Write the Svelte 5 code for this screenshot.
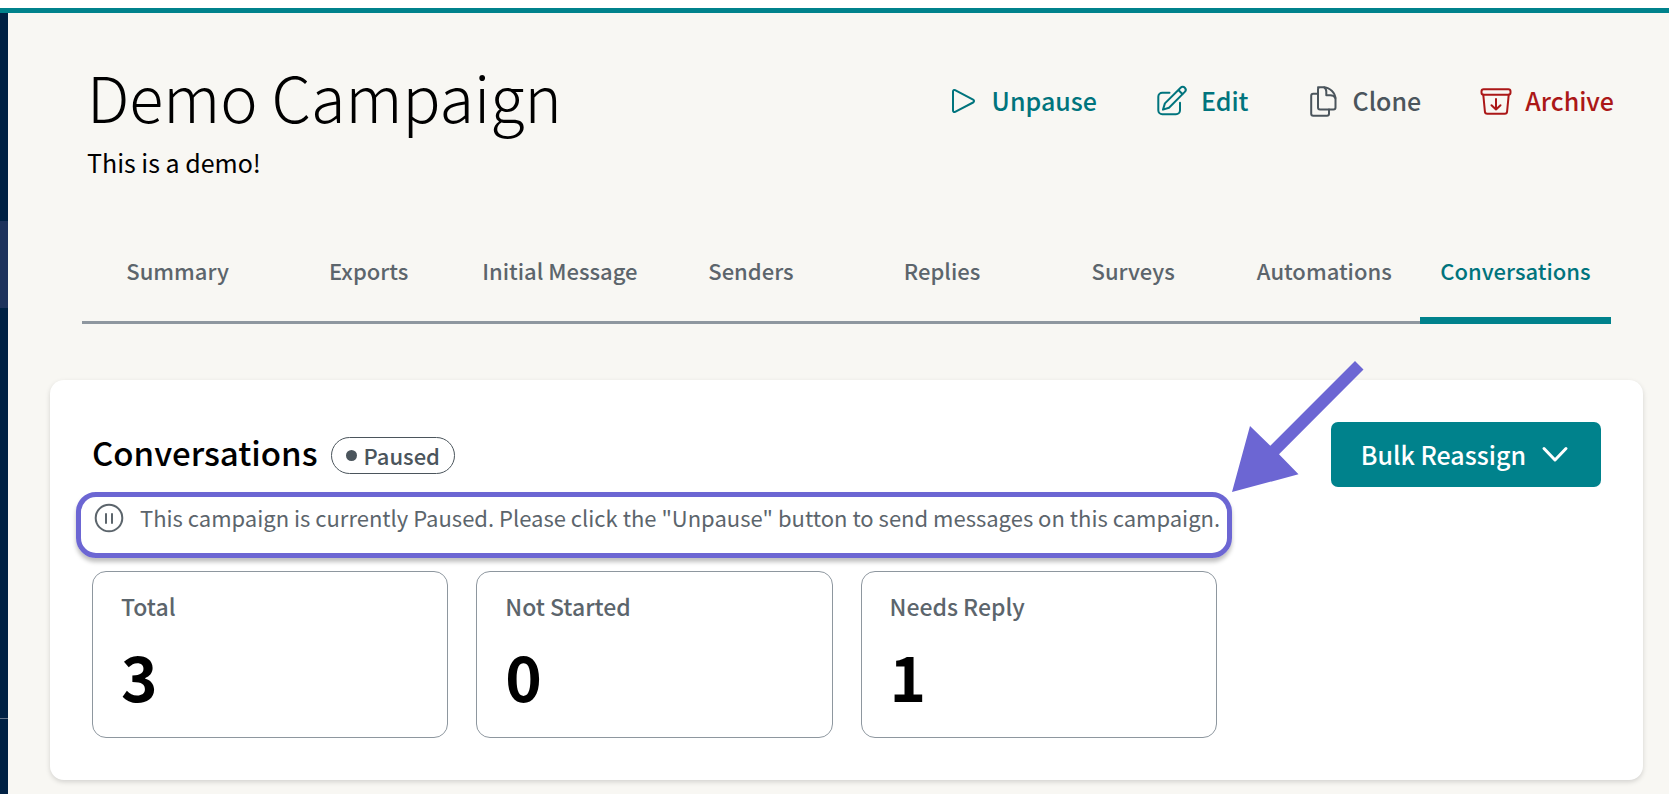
<script>
	let activeTab = $state('Conversations');

	const tabs = [
		'Summary',
		'Exports',
		'Initial Message',
		'Senders',
		'Replies',
		'Surveys',
		'Automations',
		'Conversations'
	];

	const stats = [
		{ label: 'Total', value: 3 },
		{ label: 'Not Started', value: 0 },
		{ label: 'Needs Reply', value: 1 }
	];
</script>

<div class="topbar"></div>
<div class="layout">
	<aside class="sidebar">
		<div class="sidebar-active"></div>
		<div class="sidebar-footer"></div>
	</aside>

	<main>
		<header class="header">
			<div>
				<h1>Demo Campaign</h1>
				<p class="subtitle">This is a demo!</p>
			</div>
			<div class="actions">
				<button class="action teal" type="button">
					<svg viewBox="0 0 30 30">
						<path d="M5 6.500v19c0 1.300 1 1.900 2.100 1.300l18-9.300c1.300-.7 1.300-2.100 0-2.800l-18-9.500C6 4.600 5 5.200 5 6.500z" />
					</svg>
					Unpause
				</button>
				<button class="action teal" type="button">
					<svg viewBox="0 0 30 30">
						<path d="M12.500 7.700H5.300a4 4 0 0 0-4 4v13.600a4 4 0 0 0 4 4H19a4 4 0 0 0 4-4v-7.600" />
						<path d="M6 24.600l1.900-6.200L23.600 2.700a2.900 2.900 0 0 1 4.200 4.200L12 22.700z M21.400 5l4.200 4.200" />
					</svg>
					Edit
				</button>
				<button class="action gray" type="button">
					<svg viewBox="0 0 30 30">
						<path d="M10 2.200h5.200c6.400 0 12.300 5.400 12.300 12.100v8.200a2 2 0 0 1-2 2H12a2 2 0 0 1-2-2v-18.300a2 2 0 0 1 2-2" />
						<path d="M16.200 2.300c1.700 1 2.100 2.500 2.100 4.500v3.400h3.900c2.600 0 4.500 1.300 5.200 3" />
						<path d="M10 8.800H5.200a2 2 0 0 0-2 2v18a2 2 0 0 0 2 2H19a2 2 0 0 0 2-2v-4.300" />
					</svg>
					Clone
				</button>
				<button class="action red" type="button">
					<svg viewBox="0 0 30 30">
						<rect x="0.500" y="4.300" width="29" height="5.500" rx="2.200" />
						<path d="M2.300 9.800l1.600 16.700c.1 1.500 1 2.300 2.400 2.300h17.400c1.400 0 2.300-.8 2.400-2.300l1.600-16.700" />
						<path d="M15 14v10.500M10.500 20.200l4.500 4.300 4.500-4.300" />
					</svg>
					Archive
				</button>
			</div>
		</header>

		<nav class="tabs">
			{#each tabs as tab}
				<button
					class="tab"
					class:active={activeTab === tab}
					type="button"
					onclick={() => (activeTab = tab)}>{tab}</button
				>
			{/each}
		</nav>

		<section class="panel">
			<div class="panel-header">
				<div class="panel-title">
					<h2>Conversations</h2>
					<span class="badge"><span class="dot"></span>Paused</span>
				</div>
				<button class="reassign" type="button">
					Bulk Reassign
					<svg viewBox="0 0 28 28">
						<path d="M3 7.500l11 11.500 11-11.500" />
					</svg>
				</button>
			</div>

			<div class="grid">
				<div class="notice">
					<svg class="pause" viewBox="0 0 30 30">
						<circle cx="15" cy="15" r="13.300" />
						<path d="M12 11v9M18 11v9" />
					</svg>
					<p>
						This campaign is currently Paused. Please click the "Unpause" button to send messages on
						this campaign.
					</p>
					<svg class="arrow" viewBox="0 0 132 132">
						<path d="M0 132L18 66l20.300 19.700L123 1l8.500 8.500L47 94.300l19.500 20z" />
					</svg>
				</div>
			</div>
			<div class="grid stats">
				{#each stats as stat (stat.label)}
					<div class="stat">
						<p class="stat-label">{stat.label}</p>
						<p class="stat-value">{stat.value}</p>
					</div>
				{/each}
			</div>
		</section>
	</main>
</div>

<style>
	:global(body) {
		margin: 0;
		background: #f8f7f3;
		font-family: 'Noto Sans CJK SC', 'Noto Sans', sans-serif;
		color: #000;
	}

	h1,
	h2,
	p {
		margin: 0;
	}

	button {
		border: none;
		background: none;
		padding: 0;
		font-family: inherit;
		cursor: pointer;
	}

	svg {
		flex: none;
		fill: none;
		stroke: currentColor;
		stroke-width: 2;
		stroke-linecap: round;
		stroke-linejoin: round;
		overflow: visible;
	}

	.topbar {
		height: 8px;
		background: #fff;
		border-bottom: 5px solid #00828c;
	}

	.layout {
		display: flex;
		min-height: calc(100vh - 13px);
	}

	/* Sidebar */
	.sidebar {
		display: flex;
		flex-direction: column;
		justify-content: space-between;
		box-sizing: border-box;
		width: 8px;
		padding-top: 208px;
		background: #002144;
	}

	.sidebar-active {
		height: 87px;
		background: #1e335c;
	}

	.sidebar-footer {
		height: 75px;
		border-top: 1px solid #66778c;
	}

	main {
		flex: 1;
		min-width: 0;
	}

	/* Page header */
	.header {
		display: flex;
		justify-content: space-between;
		align-items: flex-start;
		padding: 38px 55px 0 79px;
	}

	h1 {
		font-size: 63px;
		line-height: 90px;
		font-weight: 200;
	}

	.subtitle {
		font-size: 25px;
		line-height: 42px;
	}

	.actions {
		display: flex;
		gap: 60px;
		margin-top: 29px;
	}

	.action {
		display: flex;
		align-items: center;
		gap: 14px;
		font-size: 25px;
		line-height: 40px;
		font-weight: 500;
	}

	.action svg {
		width: 30px;
		height: 30px;
	}

	.teal {
		color: #00747d;
	}

	.gray {
		color: #4b555c;
	}

	.red {
		color: #ab1717;
	}

	/* Tabs */
	.tabs {
		display: grid;
		grid-template-columns: repeat(8, 1fr);
		margin: 47px 58px 0 74px;
		box-shadow: inset 0 -3px #8e979f;
	}

	.tab {
		padding: 24px 0 31px;
		border-bottom: 7px solid transparent;
		font-size: 22px;
		line-height: 32px;
		font-weight: 500;
		color: #5c656c;
		white-space: nowrap;
	}

	.tab.active {
		border-color: #00828c;
		color: #00747d;
	}

	/* Conversations panel */
	.panel {
		margin: 56px 26px 14px 42px;
		padding: 42px;
		border-radius: 14px;
		background: #fff;
		box-shadow: 0 2px 5px rgba(0, 0, 0, 0.15);
	}

	.panel-header {
		display: flex;
		justify-content: space-between;
		align-items: flex-start;
	}

	.panel-title {
		display: flex;
		align-items: flex-start;
		gap: 13px;
	}

	h2 {
		font-size: 33px;
		line-height: 60px;
		font-weight: 500;
	}

	.badge {
		display: flex;
		align-items: center;
		gap: 7px;
		margin-top: 15px;
		padding: 0 14px;
		border: 1px solid #4b555c;
		border-radius: 20px;
		font-size: 22px;
		line-height: 35px;
		font-weight: 500;
		color: #4b555c;
	}

	.dot {
		width: 11px;
		height: 11px;
		border-radius: 50%;
		background: #4b555c;
	}

	.reassign {
		display: flex;
		align-items: center;
		gap: 15px;
		padding: 0 32px 0 30px;
		border-radius: 7px;
		background: #00828c;
		font-size: 25px;
		line-height: 65px;
		font-weight: 500;
		color: #fff;
	}

	.reassign svg {
		width: 28px;
		height: 28px;
		stroke-width: 3;
	}

	.grid {
		display: grid;
		grid-template-columns: repeat(4, 1fr);
		gap: 28px;
		margin-top: 5px;
	}

	.stats {
		margin-top: 13px;
	}

	.notice {
		position: relative;
		grid-column: span 3;
		display: flex;
		gap: 16px;
		margin: 0 -15px 0 -16px;
		padding: 4px 0 18px 13px;
		border: 5px solid #6c66d3;
		border-radius: 20px;
		box-shadow: 0 4px 4px rgba(0, 0, 0, 0.25);
		font-size: 22px;
		line-height: 32px;
		color: #5c656c;
		white-space: nowrap;
	}

	.pause {
		width: 30px;
		height: 34px;
	}

	.arrow {
		position: absolute;
		left: calc(100% + 5px);
		bottom: calc(100% + 5px);
		width: 132px;
		height: 132px;
		fill: #6c66d3;
		stroke: none;
	}

	.stat {
		padding: 18px 28px 22px;
		border: 1px solid #8e979f;
		border-radius: 14px;
	}

	.stat-label {
		margin-bottom: 13px;
		font-size: 23px;
		line-height: 32px;
		font-weight: 500;
		color: #5c656c;
	}

	.stat-value {
		font-size: 62px;
		line-height: 80px;
		font-weight: 700;
	}
</style>
